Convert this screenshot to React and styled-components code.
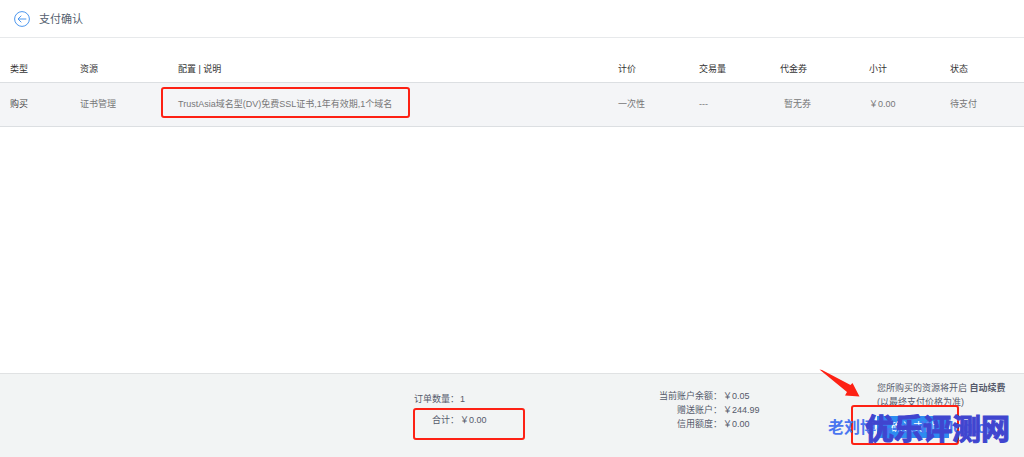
import * as React from 'react'
import styled, { createGlobalStyle } from 'styled-components'

const GlobalStyle = createGlobalStyle`
  * {
    box-sizing: border-box;
  }
  body {
    margin: 0;
    background: #fff;
    color: #666;
    font-family: "Liberation Sans", "Noto Sans CJK SC", sans-serif;
    font-size: 9px;
    line-height: 14px;
  }
`
const Page = styled.div`
  display: flex;
  flex-direction: column;
  min-height: 100vh;
  overflow: hidden;
`
const Header = styled.header`
  display: flex;
  align-items: center;
  gap: 9px;
  height: 38px;
  padding: 0 14px;
  border-bottom: 1px solid #e7e9eb;
`
const BackButton = styled.button`
  display: flex;
  padding: 0;
  border: 0;
  background: none;
  cursor: pointer;
`
const Title = styled.h1`
  margin: 0;
  font-size: 11px;
  font-weight: 400;
  color: #555f70;
`
const Main = styled.main`
  flex: 1;
  padding-top: 17px;
`
const OrderTable = styled.table`
  width: 100%;
  table-layout: fixed;
  border-collapse: collapse;
`
const Col = styled.col`
  width: ${(props) => props.$width || 'auto'};
`
const HeadCell = styled.th`
  height: 27px;
  padding: 1px 0 0 10px;
  border-bottom: 1px solid #dcdfe2;
  text-align: left;
  font-weight: 400;
  color: #333;
`
const Cell = styled.td`
  height: 44px;
  padding: 0 0 0 ${(props) => (props.$indent ? '14px' : '10px')};
  border-bottom: 1px solid #dcdfe2;
  background: #f4f5f7;
  color: ${(props) => (props.$dark ? '#444' : '#777')};
`
const Marked = styled.div`
  position: relative;
`
const RedBox = styled.div`
  position: absolute;
  top: ${(props) => props.$top};
  left: ${(props) => props.$left};
  width: ${(props) => props.$width};
  height: ${(props) => props.$height};
  border: 2px solid #fd2114;
  border-radius: 3px;
  pointer-events: none;
`
const Footer = styled.footer`
  display: grid;
  grid-template-columns: 1fr 245px 218px 147px;
  height: 84px;
  border-top: 1px solid #e0e2e3;
  background: #f2f4f4;
  color: #555a6b;
`
const Summary = styled.dl`
  position: relative;
  display: grid;
  grid-template-columns: 45px auto;
  grid-column: 2;
  align-content: start;
  row-gap: ${(props) => props.$gap || '0'};
  margin: 0;
  padding-top: 18px;
`
const Balance = styled(Summary)`
  grid-template-columns: 63px auto;
  grid-column: 3;
  padding-top: 15px;
`
const Label = styled.dt`
  text-align: right;
`
const Value = styled.dd`
  margin: 0 0 0 1px;
`
const Action = styled.div`
  position: relative;
  grid-column: 4;
  padding-top: 7px;
`
const Notice = styled.p`
  margin: 0;
  white-space: nowrap;
`
const PayButton = styled.button`
  display: block;
  width: 72px;
  height: 22px;
  margin-top: 7px;
  padding: 0;
  border: 0;
  background: #2d8cf0;
  color: #fff;
  font: inherit;
  font-size: 11px;
  cursor: pointer;
`
const Arrow = styled.svg`
  position: absolute;
  top: -6px;
  left: -60px;
`
const SiteMark = styled.span`
  position: absolute;
  top: 43px;
  left: -49px;
  font-size: 16px;
  font-weight: 700;
  line-height: 22px;
  color: #4a76f0;
  white-space: nowrap;
  pointer-events: none;
`
const BrandMark = styled.span`
  position: absolute;
  top: 38px;
  left: -12px;
  font-size: 29px;
  font-weight: 700;
  line-height: 36px;
  color: #4045cf;
  -webkit-text-stroke: 1px #4045cf;
  white-space: nowrap;
  pointer-events: none;
`

const columns = [
  { title: '类型', width: '70px' },
  { title: '资源', width: '98px' },
  { title: '配置 | 说明' },
  { title: '计价', width: '81px' },
  { title: '交易量', width: '81px' },
  { title: '代金券', width: '89px' },
  { title: '小计', width: '81px' },
  { title: '状态', width: '84px' },
]

const balances = [
  { label: '当前账户余额：', value: '￥0.05' },
  { label: '赠送账户：', value: '￥244.99' },
  { label: '信用额度：', value: '￥0.00' },
]

const BackIcon = () => (
  <svg width="16" height="16" viewBox="0 0 16 16" fill="none" stroke="#4d97ee">
    <circle cx="8" cy="8" r="7.4" />
    <path d="M12.300 8H4M7.300 4.700L4 8l3.300 3.300" />
  </svg>
)

const App = () => {
  return (
    <Page>
      <GlobalStyle />
      <Header>
        <BackButton type="button" aria-label="返回">
          <BackIcon />
        </BackButton>
        <Title>支付确认</Title>
      </Header>

      <Main>
        <OrderTable>
          <colgroup>
            {columns.map((col) => (
              <Col key={col.title} $width={col.width} />
            ))}
          </colgroup>
          <thead>
            <tr>
              {columns.map((col) => (
                <HeadCell key={col.title}>{col.title}</HeadCell>
              ))}
            </tr>
          </thead>
          <tbody>
            <tr>
              <Cell $dark>购买</Cell>
              <Cell>证书管理</Cell>
              <Cell>
                <Marked>
                  TrustAsia域名型(DV)免费SSL证书,1年有效期,1个域名
                  <RedBox $top="-10px" $left="-17px" $width="249px" $height="31px" />
                </Marked>
              </Cell>
              <Cell>一次性</Cell>
              <Cell>---</Cell>
              <Cell $indent>暂无券</Cell>
              <Cell>￥0.00</Cell>
              <Cell>待支付</Cell>
            </tr>
          </tbody>
        </OrderTable>
      </Main>

      <Footer>
        <Summary $gap="7px">
          <Label>订单数量：</Label>
          <Value>1</Value>
          <Label>合计：</Label>
          <Value>￥0.00</Value>
          <RedBox $top="34px" $left="-1px" $width="112px" $height="32px" />
        </Summary>

        <Balance>
          {balances.map((item) => (
            <React.Fragment key={item.label}>
              <Label>{item.label}</Label>
              <Value>{item.value}</Value>
            </React.Fragment>
          ))}
        </Balance>

        <Action>
          <Notice>
            您所购买的资源将开启 <b>自动续费</b>
          </Notice>
          <Notice>(以最终支付价格为准)</Notice>
          <PayButton type="button">确认支付</PayButton>
          <RedBox $top="31px" $left="-26px" $width="108px" $height="40px" />
          <Arrow width="46" height="32" viewBox="0 0 46 32" fill="#fd2114">
            <path d="M2.500 1.500L5 2L33.500 17L35.500 15L42.500 28.500L28 27.500L30 24Z" />
          </Arrow>
          <SiteMark>老刘博客-laoliublog.cn</SiteMark>
          <BrandMark>优乐评测网</BrandMark>
        </Action>
      </Footer>
    </Page>
  )
}

export default App
